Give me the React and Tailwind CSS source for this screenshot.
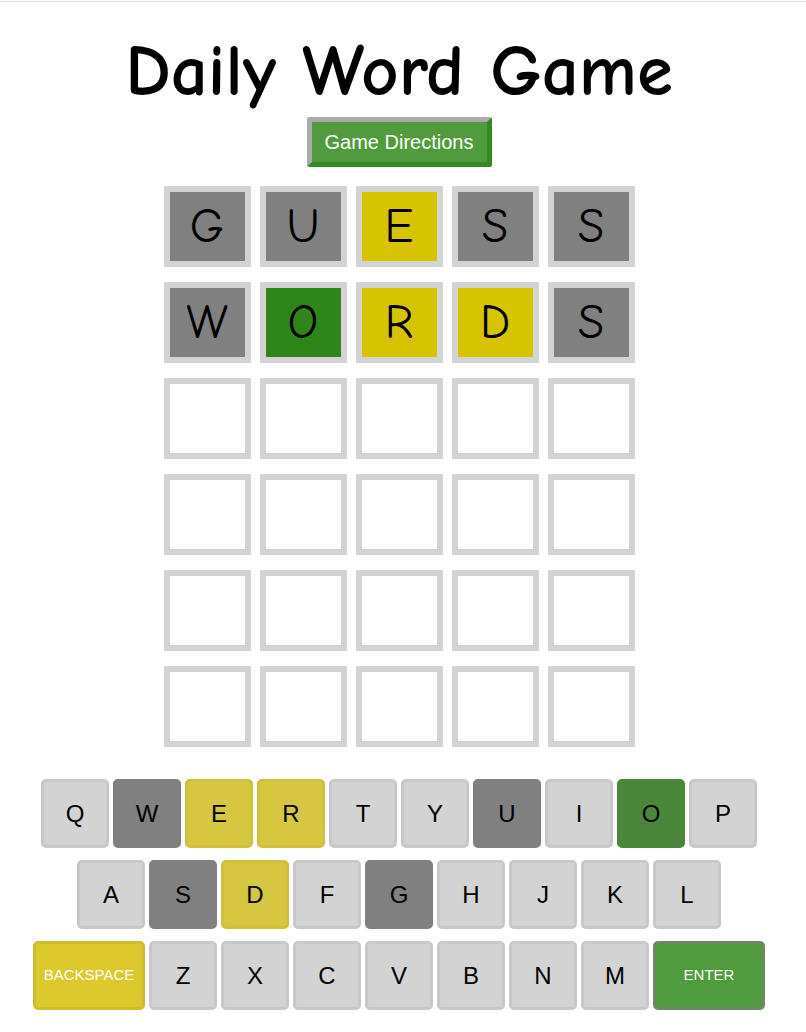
import React from "react";

const rows = [
  [["G", "g"], ["U", "g"], ["E", "y"], ["S", "g"], ["S", "g"]],
  [["W", "g"], ["O", "G"], ["R", "y"], ["D", "y"], ["S", "g"]],
  [], [], [], [],
];

const tileBg = { g: "bg-[#808080]", y: "bg-[#d8c300]", G: "bg-[#2e8618]" };

const kb = [
  [["Q", "l"], ["W", "g"], ["E", "y"], ["R", "y"], ["T", "l"], ["Y", "l"], ["U", "g"], ["I", "l"], ["O", "G"], ["P", "l"]],
  [["A", "l"], ["S", "g"], ["D", "y"], ["F", "l"], ["G", "g"], ["H", "l"], ["J", "l"], ["K", "l"], ["L", "l"]],
  [["BACKSPACE", "b"], ["Z", "l"], ["X", "l"], ["C", "l"], ["V", "l"], ["B", "l"], ["N", "l"], ["M", "l"], ["ENTER", "e"]],
];

const keyStyle = {
  l: "bg-[#d3d3d3] border-[#c8c8c8] text-black w-[68px]",
  g: "bg-[#808080] border-[#808080] text-black w-[68px]",
  y: "bg-[#d6c640] border-[#d0c03c] text-black w-[68px]",
  G: "bg-[#4a873a] border-[#4a873a] text-black w-[68px]",
  b: "bg-[#dcc92b] border-[#d0bd2e] text-white w-[112px]",
  e: "bg-[#519b3f] border-[#6c8a62] text-white w-[112px]",
};

const comic = { fontFamily: '"Comic Sans MS", "Comic Neue", "DejaVu Sans", sans-serif' };

export default function App() {
  return (
    <div className="w-[806px] min-h-[1032px] bg-white">
      <div className="h-px mt-px bg-[#f4e3e3] w-full" />
      <div className="w-[798px] flex flex-col items-center">
        <h1
          className="mt-[36px] text-[73px] leading-[66px] font-bold text-black whitespace-nowrap"
          style={comic}
        >
          Daily Word Game
        </h1>
        <button
          className="mt-[13px] w-[185px] h-[50px] rounded-[3px] border-[5px] border-t-[#ababab] border-l-[#ababab] border-b-[#328a20] border-r-[#328a20] bg-[#519b3f] text-white text-[20px] font-['Liberation_Sans',Arial,sans-serif]"
        >
          Game Directions
        </button>
        <div className="mt-[19px] flex flex-col gap-[15px]">
          {rows.map((r, i) => (
            <div key={i} className="flex gap-[9px]">
              {[0, 1, 2, 3, 4].map((j) => {
                const t = r[j];
                return (
                  <div
                    key={j}
                    className={`w-[87px] h-[81px] border-[6px] border-[#d3d3d3] flex items-center justify-center text-[48px] text-black ${t ? tileBg[t[1]] : "bg-white"}`}
                    style={comic}
                  >
                    {t ? t[0] : ""}
                  </div>
                );
              })}
            </div>
          ))}
        </div>
        <div className="mt-[32px] flex flex-col items-center gap-[12px] font-['Liberation_Sans',Arial,sans-serif]">
          {kb.map((r, i) => (
            <div key={i} className="flex gap-[4px]">
              {r.map(([k, s], j) => (
                <div
                  key={j}
                  className={`h-[69px] rounded-[5px] border-[3px] flex items-center justify-center ${keyStyle[s]} ${k.length > 1 ? "text-[15px]" : "text-[24px]"}`}
                >
                  {k}
                </div>
              ))}
            </div>
          ))}
        </div>
      </div>
    </div>
  );
}
